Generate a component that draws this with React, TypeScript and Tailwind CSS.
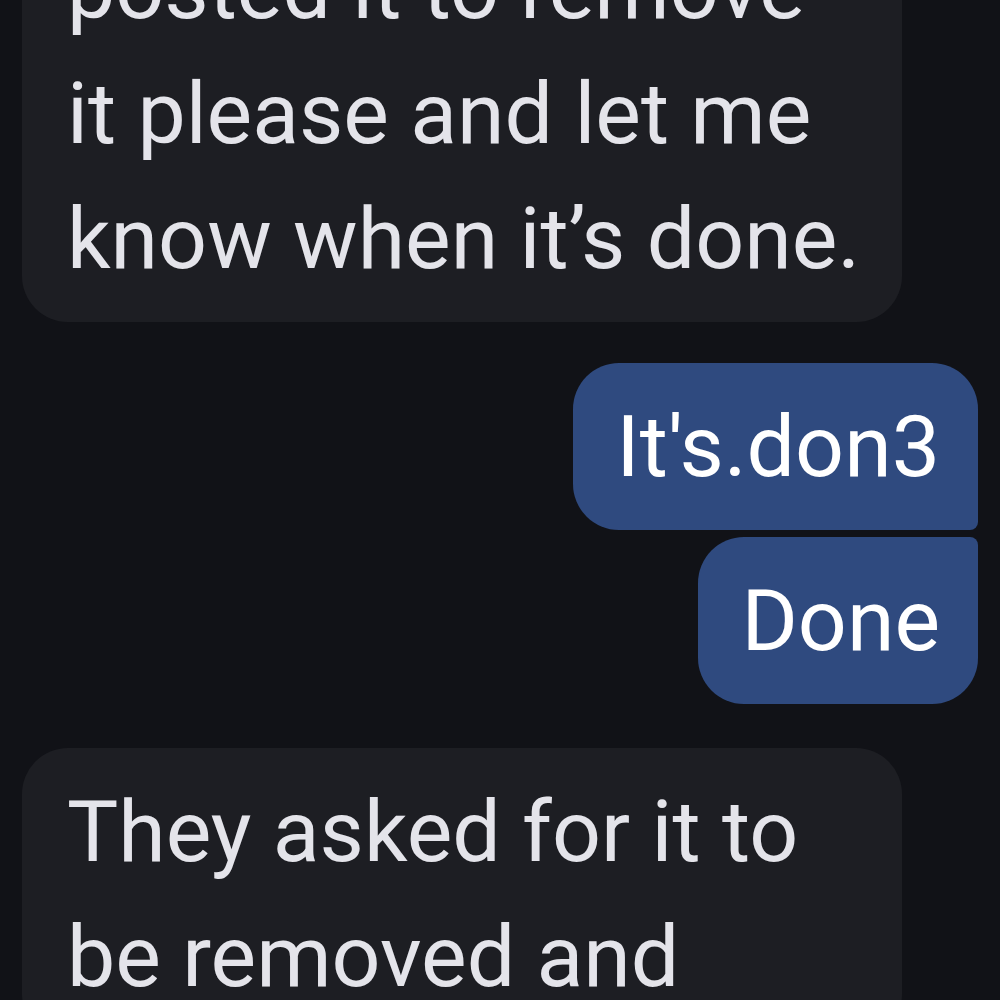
import React from 'react';

type Msg = { id: number; from: 'them' | 'me'; lines: string[] };

const messages: Msg[] = [
  { id: 1, from: 'them', lines: ['posted it to remove', 'it please and let me', 'know when it’s done.'] },
  { id: 2, from: 'me', lines: ["It's.don3"] },
  { id: 3, from: 'me', lines: ['Done'] },
  { id: 4, from: 'them', lines: ['They asked for it to', 'be removed and'] },
];

function Received({ lines, first }: { lines: string[]; first?: boolean }) {
  return (
    <div
      className={
        'w-[880px] bg-[#1d1e23] text-[#e4e4ea] rounded-[46px] px-[45px] pt-[21px] pb-[21px] ' +
        (first ? 'rounded-t-none' : '')
      }
    >
      {lines.map((l) => (
        <div key={l} className="whitespace-nowrap">
          {l}
        </div>
      ))}
    </div>
  );
}

function Sent({ text, position }: { text: string; position: 'top' | 'bottom' }) {
  return (
    <div
      className={
        'self-end bg-[#2f4a7f] text-white pl-[43px] pr-[38px] pt-[21px] pb-[21px] ' +
        (position === 'top'
          ? 'rounded-t-[46px] rounded-bl-[46px] rounded-br-[8px]'
          : 'rounded-b-[46px] rounded-tl-[46px] rounded-tr-[8px]')
      }
    >
      {text}
    </div>
  );
}

export default function App() {
  return (
    <div
      className="w-[1000px] h-[1000px] overflow-hidden bg-[#111217] text-[86px] leading-[125px]"
      style={{ fontFamily: 'Roboto, "Noto Sans", sans-serif' }}
    >
      <div className="-mt-[95px] pl-[22px] pr-[22px] flex flex-col">
        <Received lines={messages[0].lines} first />
        <div className="mt-[41px] flex flex-col gap-[7px]">
          <Sent text={messages[1].lines[0]} position="top" />
          <Sent text={messages[2].lines[0]} position="bottom" />
        </div>
        <div className="mt-[44px]">
          <Received lines={messages[3].lines} />
        </div>
      </div>
    </div>
  );
}
